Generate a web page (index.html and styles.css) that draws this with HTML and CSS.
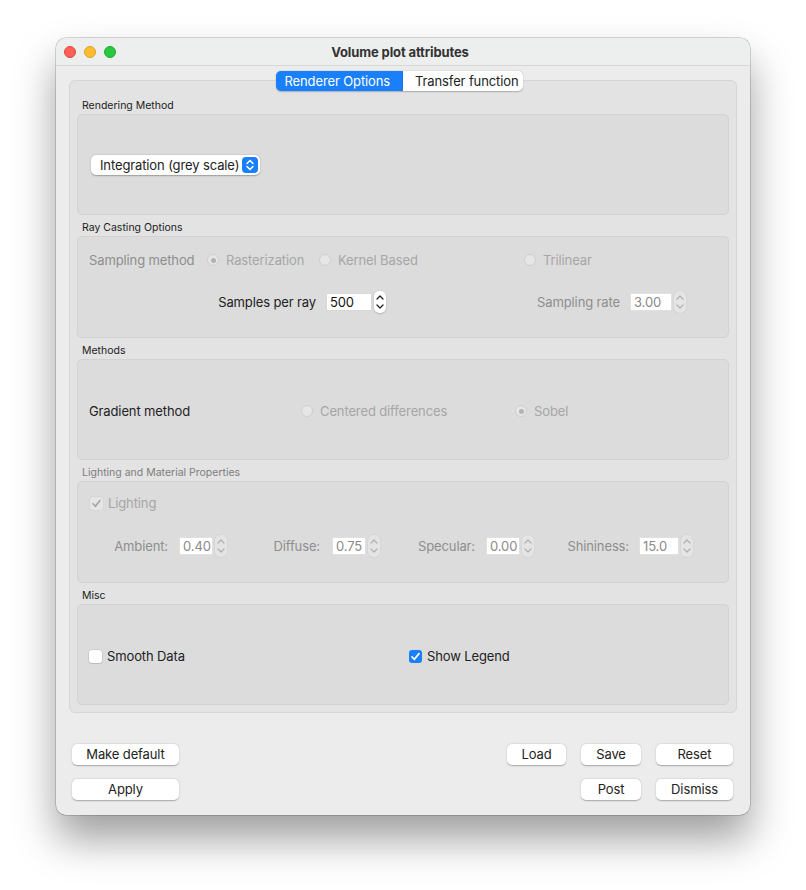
FILE: index.html
```html
<!DOCTYPE html>
<html lang="en">
<head>
    <meta charset="UTF-8">
    <meta name="viewport" content="width=device-width, initial-scale=1.0">
    <title>Volume plot attributes</title>
    <link rel="stylesheet" href="styles.css">
</head>
<body>
    <div class="window">
        <div class="titlebar">
            <div class="lights">
                <span class="light red"></span>
                <span class="light yellow"></span>
                <span class="light green"></span>
            </div>
            <div class="title">Volume plot attributes</div>
        </div>

        <div class="content">
            <div class="tabbar">
                <span class="tab active">Renderer Options</span>
                <span class="tab">Transfer function</span>
            </div>

            <div class="tab-pane">
                <!-- Rendering method -->
                <div class="group-title">Rendering Method</div>
                <div class="group-box box-a center">
                    <div class="popup">
                        <span class="popup-text">Integration (grey scale)</span>
                        <span class="popup-arrows">
                            <svg width="16" height="16" viewBox="0 0 16 16"><path d="M5 6.5 L8 3.5 L11 6.5 M5 9.5 L8 12.5 L11 9.5" fill="none" stroke="#fff" stroke-width="1.5" stroke-linecap="round" stroke-linejoin="round"/></svg>
                        </span>
                    </div>
                </div>

                <!-- Ray casting -->
                <div class="group-title">Ray Casting Options</div>
                <div class="group-box box-b rows">
                    <div class="row ray-methods">
                        <span class="label disabled-label">Sampling method</span>
                        <span class="radio-item"><span class="radio on"></span><span class="dim">Rasterization</span></span>
                        <span class="radio-item"><span class="radio"></span><span class="dim">Kernel Based</span></span>
                        <span class="radio-item"><span class="radio"></span><span class="dim">Trilinear</span></span>
                    </div>
                    <div class="row ray-values">
                        <span class="label right">Samples per ray</span>
                        <span class="spin">
                            <span class="spin-field w46">500</span>
                            <span class="stepper live">
                                <svg width="12" height="22" viewBox="0 0 12 22"><path d="M3 8 L6 5 L9 8 M3 14 L6 17 L9 14" fill="none" stroke="#222" stroke-width="1.3" stroke-linecap="round" stroke-linejoin="round"/></svg>
                            </span>
                        </span>
                        <span class="label right disabled-label">Sampling rate</span>
                        <span class="spin">
                            <span class="spin-field w42 off">3.00</span>
                            <span class="stepper">
                                <svg width="12" height="22" viewBox="0 0 12 22"><path d="M3 8 L6 5 L9 8 M3 14 L6 17 L9 14" fill="none" stroke="#b0b0b0" stroke-width="1.2" stroke-linecap="round" stroke-linejoin="round"/></svg>
                            </span>
                        </span>
                    </div>
                </div>

                <!-- Gradient methods -->
                <div class="group-title">Methods</div>
                <div class="group-box box-a center">
                    <div class="row gradient-row">
                        <span class="label">Gradient method</span>
                        <span class="radio-item"><span class="radio"></span><span class="dim">Centered differences</span></span>
                        <span class="radio-item"><span class="radio on"></span><span class="dim">Sobel</span></span>
                    </div>
                </div>

                <!-- Lighting -->
                <div class="group-title muted">Lighting and Material Properties</div>
                <div class="group-box box-b rows light-rows">
                    <div class="row">
                        <span class="check-item">
                            <span class="check dim-check">
                                <svg width="13" height="13" viewBox="0 0 13 13"><path d="M3 6.8 L5.4 9.3 L10 3.6" fill="none" stroke="#a2a2a2" stroke-width="1.6" stroke-linecap="round" stroke-linejoin="round"/></svg>
                            </span>
                            <span class="dim">Lighting</span>
                        </span>
                    </div>
                    <div class="row material-row">
                        <span class="label right disabled-label">Ambient:</span>
                        <span class="spin pad11">
                            <span class="spin-field w34 off">0.40</span>
                            <span class="stepper">
                                <svg width="12" height="22" viewBox="0 0 12 22"><path d="M3 8 L6 5 L9 8 M3 14 L6 17 L9 14" fill="none" stroke="#b0b0b0" stroke-width="1.2" stroke-linecap="round" stroke-linejoin="round"/></svg>
                            </span>
                        </span>
                        <span class="label right disabled-label">Diffuse:</span>
                        <span class="spin pad12">
                            <span class="spin-field w34 off">0.75</span>
                            <span class="stepper">
                                <svg width="12" height="22" viewBox="0 0 12 22"><path d="M3 8 L6 5 L9 8 M3 14 L6 17 L9 14" fill="none" stroke="#b0b0b0" stroke-width="1.2" stroke-linecap="round" stroke-linejoin="round"/></svg>
                            </span>
                        </span>
                        <span class="label right disabled-label">Specular:</span>
                        <span class="spin pad11">
                            <span class="spin-field w34 off">0.00</span>
                            <span class="stepper">
                                <svg width="12" height="22" viewBox="0 0 12 22"><path d="M3 8 L6 5 L9 8 M3 14 L6 17 L9 14" fill="none" stroke="#b0b0b0" stroke-width="1.2" stroke-linecap="round" stroke-linejoin="round"/></svg>
                            </span>
                        </span>
                        <span class="label right disabled-label">Shininess:</span>
                        <span class="spin pad10">
                            <span class="spin-field w40 off">15.0</span>
                            <span class="stepper">
                                <svg width="12" height="22" viewBox="0 0 12 22"><path d="M3 8 L6 5 L9 8 M3 14 L6 17 L9 14" fill="none" stroke="#b0b0b0" stroke-width="1.2" stroke-linecap="round" stroke-linejoin="round"/></svg>
                            </span>
                        </span>
                    </div>
                </div>

                <!-- Misc -->
                <div class="group-title">Misc</div>
                <div class="group-box box-a center">
                    <div class="row misc-row">
                        <span class="check-item">
                            <span class="check"></span>
                            <span>Smooth Data</span>
                        </span>
                        <span class="check-item">
                            <span class="check checked">
                                <svg width="13" height="13" viewBox="0 0 13 13"><path d="M3 6.8 L5.4 9.3 L10 3.6" fill="none" stroke="#fff" stroke-width="1.7" stroke-linecap="round" stroke-linejoin="round"/></svg>
                            </span>
                            <span>Show Legend</span>
                        </span>
                    </div>
                </div>
            </div>

            <div class="button-grid">
                <a href="#" class="btn">Make default</a>
                <span></span>
                <a href="#" class="btn">Load</a>
                <a href="#" class="btn">Save</a>
                <a href="#" class="btn">Reset</a>

                <a href="#" class="btn">Apply</a>
                <span></span>
                <span></span>
                <a href="#" class="btn">Post</a>
                <a href="#" class="btn">Dismiss</a>
            </div>
        </div>
    </div>
</body>
</html>
```

FILE: styles.css
```css
:root {
    --page-color: #ffffff;
    --window-color: #ececec;
    --titlebar-color: #edefee;
    --pane-color: #e3e3e3;
    --box-color: #dcdcdc;
    --border-color: #d2d2d2;
    --text-color: #222222;
    --dim-text: #a6a6a6;
    --label-dim: #8e8e8e;
    --accent-color: #1a7ffb;
}

* {
    margin: 0;
    padding: 0;
    box-sizing: border-box;
}

html {
    background-color: var(--page-color);
}

body {
    font-family: Inter, "Noto Sans", sans-serif;
    font-size: 13px;
    letter-spacing: -0.12px;
    color: var(--text-color);
    padding: 38px 0 0 56px;
    min-height: 890px;
}

.window {
    width: 694px;
    background-color: var(--window-color);
    border-radius: 10px;
    box-shadow: 0 24px 42px rgba(0, 0, 0, 0.38), 0 0 0 0.5px rgba(0, 0, 0, 0.3);
}

/* title bar */
.titlebar {
    height: 28px;
    background-color: var(--titlebar-color);
    border-bottom: 1px solid #d6d6d6;
    border-radius: 10px 10px 0 0;
    display: flex;
    align-items: center;
}

.lights {
    display: flex;
    gap: 8px;
    margin-left: 8px;
}

.light {
    width: 12px;
    height: 12px;
    border-radius: 50%;
}

.light.red { background-color: #fe5f57; border: 0.5px solid #e0443e; }
.light.yellow { background-color: #febc2e; border: 0.5px solid #dea123; }
.light.green { background-color: #28c840; border: 0.5px solid #1aab29; }

.title {
    flex: 1;
    text-align: center;
    font-weight: 700;
    font-size: 13px;
    color: #333;
    margin-right: 60px;
    margin-left: -6px;
}

.content {
    padding: 5px 13px 15px 13px;
}

/* tabs */
.tabbar {
    display: flex;
    justify-content: center;
    height: 20px;
    margin-bottom: -11px;
    padding-right: 7px;
    position: relative;
    z-index: 1;
}

.tab {
    display: flex;
    align-items: center;
    background-color: #fff;
    padding: 0 5px 0 12px;
    line-height: 20px;
    color: var(--text-color);
    border-radius: 0 5px 5px 0;
    box-shadow: 0 0.5px 1.5px rgba(0, 0, 0, 0.25);
}

.tab.active {
    background-color: var(--accent-color);
    color: #fff;
    padding: 0 13px 0 9px;
    border-radius: 5px 0 0 5px;
}

.tab-pane {
    background-color: var(--pane-color);
    border: 1px solid #d6d6d6;
    border-radius: 6px;
    padding: 12px 7px 7px 7px;
}

/* group boxes */
.group-title {
    font-size: 10.5px;
    letter-spacing: 0;
    line-height: 14px;
    padding: 6px 0 1px 5px;
    color: var(--text-color);
}

.group-title.muted {
    color: #7d7d7d;
}

.group-box {
    background-color: var(--box-color);
    border: 1px solid var(--border-color);
    border-radius: 5px;
    padding: 0 11px;
}

.box-a { height: 101px; }
.box-b { height: 102px; }

.group-box.center {
    display: flex;
    align-items: center;
}

.group-box.rows {
    display: flex;
    flex-direction: column;
    padding-top: 13px;
    gap: 21px;
}

.group-box.light-rows {
    padding-top: 11px;
    gap: 22px;
}

.row {
    display: grid;
    align-items: center;
    height: 20px;
}

.label {
    white-space: nowrap;
}

.label.right {
    text-align: right;
}

.disabled-label {
    color: var(--label-dim);
}

.dim {
    color: var(--dim-text);
}

/* popup button */
.popup {
    display: flex;
    align-items: center;
    height: 20px;
    width: 169px;
    margin-left: 2px;
    margin-top: 1px;
    background-color: #fff;
    border-radius: 5px;
    box-shadow: 0 0.5px 1.5px rgba(0, 0, 0, 0.3);
    padding: 0 2px 0 9px;
}

.popup-text {
    flex: 1;
    white-space: nowrap;
}

.popup-arrows {
    width: 16px;
    height: 16px;
    border-radius: 4px;
    background-color: var(--accent-color);
    display: flex;
}

/* radios */
.radio-item {
    display: flex;
    align-items: center;
    gap: 7px;
    white-space: nowrap;
}

.radio {
    width: 12px;
    height: 12px;
    border-radius: 50%;
    background-color: #e6e6e6;
    border: 0.5px solid #cfcfcf;
    display: flex;
    align-items: center;
    justify-content: center;
}

.radio.on::after {
    content: "";
    width: 5px;
    height: 5px;
    border-radius: 50%;
    background-color: #b3b3b3;
}

.ray-methods {
    grid-template-columns: 118px 112px 205px auto;
}

.ray-values {
    grid-template-columns: 227px 70px 234px auto;
}

.gradient-row {
    grid-template-columns: 212px 214px auto;
    width: 100%;
    margin-top: 3px;
}

.material-row {
    grid-template-columns: 79px 60px 92px 61px 94px 60px 94px auto;
}

.misc-row {
    grid-template-columns: 320px auto;
    width: 100%;
    margin-top: 3px;
}

/* spin boxes */
.spin {
    display: flex;
    align-items: center;
    gap: 2px;
    padding-left: 10px;
}

.spin.pad11 { padding-left: 11px; }
.spin.pad12 { padding-left: 12px; }
.spin.pad10 { padding-left: 10px; }

.spin-field {
    height: 18px;
    line-height: 17px;
    background-color: #fff;
    border: 1px solid #d8d8d8;
    padding-left: 3px;
    color: #111;
}

.spin-field.off {
    color: #8a8a8a;
    border-color: #e0e0e0;
}

.w34 { width: 34px; }
.w40 { width: 40px; }
.w42 { width: 42px; }
.w46 { width: 46px; }

.stepper {
    width: 12px;
    height: 22px;
    border-radius: 5px;
    background-color: #e4e4e4;
    box-shadow: 0 0 0 0.5px #cfcfcf;
    display: flex;
}

.stepper.live {
    background-color: #fff;
    box-shadow: 0 0.5px 1.5px rgba(0, 0, 0, 0.3);
}

/* checkboxes */
.check-item {
    display: flex;
    align-items: center;
    gap: 5px;
    white-space: nowrap;
}

.check {
    width: 13px;
    height: 13px;
    border-radius: 3px;
    background-color: #fff;
    box-shadow: 0 0 0 0.5px #bdbdbd, 0 0.5px 1px rgba(0, 0, 0, 0.15);
    display: flex;
}

.check.dim-check {
    background-color: #e6e6e6;
    box-shadow: 0 0 0 0.5px #d0d0d0;
    margin-left: 1px;
}

.check.checked {
    background-color: var(--accent-color);
    box-shadow: none;
}

/* bottom buttons */
.button-grid {
    display: grid;
    grid-template-columns: 107px 1fr 59px 60px 77px;
    column-gap: 15px;
    row-gap: 14px;
    margin-top: 31px;
    padding: 0 4px 0 3px;
}

.btn {
    height: 21px;
    line-height: 21px;
    background-color: #fff;
    border-radius: 5px;
    text-align: center;
    text-decoration: none;
    color: var(--text-color);
    box-shadow: 0 0.5px 1.5px rgba(0, 0, 0, 0.3);
}
```
